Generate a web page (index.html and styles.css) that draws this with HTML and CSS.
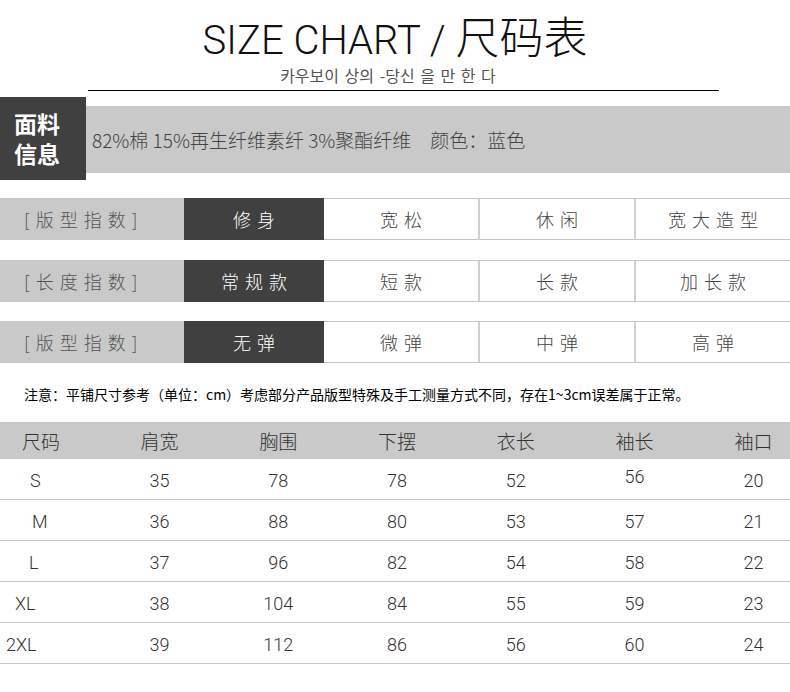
FILE: index.html
```html
<!DOCTYPE html>
<html lang="zh">
<head>
<meta charset="utf-8">
<title>SIZE CHART / 尺码表</title>
<link rel="stylesheet" href="styles.css">
</head>
<body>
<div class="page">
  <header class="head">
    <h1 class="title">SIZE CHART / <span class="title-cjk">尺码表</span></h1>
    <p class="subtitle">카우보이 상의 -당신 을 만 한 다</p>
    <div class="rule"></div>
  </header>

  <section class="fabric">
    <div class="fabric-tag"><span class="tag-line">面料</span><span class="tag-line">信息</span></div>
    <div class="fabric-bar">82%棉 15%再生纤维素纤 3%聚酯纤维　颜色：蓝色</div>
  </section>

  <section class="specs">
    <div class="spec-row">
      <div class="spec-label">[版型指数]</div>
      <div class="spec-cell active">修身</div>
      <div class="spec-cell">宽松</div>
      <div class="spec-cell">休闲</div>
      <div class="spec-cell">宽大造型</div>
    </div>
    <div class="spec-row">
      <div class="spec-label">[长度指数]</div>
      <div class="spec-cell active">常规款</div>
      <div class="spec-cell">短款</div>
      <div class="spec-cell">长款</div>
      <div class="spec-cell">加长款</div>
    </div>
    <div class="spec-row">
      <div class="spec-label">[版型指数]</div>
      <div class="spec-cell active">无弹</div>
      <div class="spec-cell">微弹</div>
      <div class="spec-cell">中弹</div>
      <div class="spec-cell">高弹</div>
    </div>
  </section>

  <p class="note">注意：平铺尺寸参考（单位：cm）考虑部分产品版型特殊及手工测量方式不同，存在1~3cm误差属于正常。</p>

  <section class="size-table">
    <div class="t-row t-head">
      <div class="t-first h">尺码</div>
      <div>肩宽</div><div>胸围</div><div>下摆</div><div>衣长</div><div>袖长</div><div>袖口</div>
    </div>
    <div class="t-row">
      <div class="t-first s">S</div>
      <div>35</div><div>78</div><div>78</div><div>52</div><div class="raised">56</div><div>20</div>
    </div>
    <div class="t-row">
      <div class="t-first m">M</div>
      <div>36</div><div>88</div><div>80</div><div>53</div><div>57</div><div>21</div>
    </div>
    <div class="t-row">
      <div class="t-first l">L</div>
      <div>37</div><div>96</div><div>82</div><div>54</div><div>58</div><div>22</div>
    </div>
    <div class="t-row">
      <div class="t-first xl">XL</div>
      <div>38</div><div>104</div><div>84</div><div>55</div><div>59</div><div>23</div>
    </div>
    <div class="t-row">
      <div class="t-first xxl">2XL</div>
      <div>39</div><div>112</div><div>86</div><div>56</div><div>60</div><div>24</div>
    </div>
  </section>
</div>
</body>
</html>
```

FILE: styles.css
```css
* { box-sizing: border-box; }

html, body {
  margin: 0;
  padding: 0;
  background: #fff;
}

body {
  width: 790px;
  height: 692px;
  overflow: hidden;
  font-family: "Noto Sans CJK SC", "Noto Sans", sans-serif;
  color: #333;
}

.page {
  width: 790px;
}

/* Header */
.head {
  padding-top: 12px;
}

.title {
  margin: 0;
  text-align: center;
  font-family: Roboto, "Noto Sans CJK SC", sans-serif;
  font-weight: 300;
  font-size: 40px;
  line-height: 46px;
  color: #111;
}

.title-cjk {
  font-family: "Noto Sans CJK SC", sans-serif;
  font-weight: 300;
  font-size: 44px;
}

.subtitle {
  margin: 2px 0 0;
  padding-right: 14px;
  text-align: center;
  font-family: "Noto Sans CJK KR", sans-serif;
  font-size: 16px;
  line-height: 18px;
  word-spacing: 2px;
  color: #555;
  font-weight: 400;
}

.rule {
  margin: 6px 0 0 88px;
  width: 631px;
  height: 1px;
  background: #000;
}

/* Fabric */
.fabric {
  margin-top: 6px;
  display: flex;
  align-items: center;
}

.fabric-tag {
  width: 86px;
  height: 83px;
  background: #404040;
  color: #fff;
  font-weight: 700;
  font-size: 23px;
  padding: 12px 0 0 14px;
  display: flex;
  flex-direction: column;
  gap: 2px;
}

.tag-line {
  display: block;
  line-height: 28px;
}

.fabric-bar {
  flex: 1;
  height: 67px;
  margin-top: 2px;
  background: #c8c9c8;
  display: flex;
  align-items: center;
  padding-left: 6px;
  font-size: 19px;
  color: #444;
  font-weight: 300;
}

/* Spec rows */
.specs {
  margin-top: 18px;
  display: flex;
  flex-direction: column;
  gap: 19.5px;
}

.spec-row {
  display: grid;
  grid-template-columns: 184px 140px 154px 156px 156px;
  height: 42px;
}

.spec-label {
  background: #c8c9c8;
  display: flex;
  align-items: center;
  padding-left: 24px;
  font-size: 18px;
  letter-spacing: 6px;
  color: #555;
  font-weight: 300;
}

.spec-cell {
  display: flex;
  align-items: center;
  justify-content: center;
  font-size: 18px;
  letter-spacing: 6px;
  padding-left: 6px;
  color: #444;
  font-weight: 300;
  border-top: 1px solid #c6c6c6;
  border-bottom: 1px solid #c6c6c6;
  border-left: 2px solid #cfcfcf;
}

.spec-cell.active {
  background: #404040;
  color: #fff;
  border: none;
}

.spec-cell.active + .spec-cell {
  border-left: none;
}

/* Note */
.note {
  margin: 21px 0 0 24px;
  font-size: 14px;
  line-height: 20px;
  color: #000;
  font-weight: 400;
}

/* Size table */
.size-table {
  margin-top: 18px;
  width: 790px;
  overflow: hidden;
}

.t-row {
  display: grid;
  grid-template-columns: 100px repeat(6, 118.8px);
  height: 41px;
  align-items: center;
  border-bottom: 1px solid #c8c8c8;
  font-family: Roboto, "Noto Sans", sans-serif;
  font-weight: 300;
  font-size: 18px;
  color: #333;
  padding-top: 3px;
  width: 813px;
}

.t-row > div {
  text-align: center;
}

.t-row > .t-first {
  text-align: left;
}

.t-head {
  height: 37px;
  background: #c8c9c8;
  border-bottom: none;
  padding-top: 0;
  font-family: "Noto Sans CJK SC", sans-serif;
  font-size: 19px;
  color: #333;
}

.t-first.h { padding-left: 22px; }
.t-first.s { padding-left: 30px; }
.t-first.m { padding-left: 32px; }
.t-first.l { padding-left: 29px; }
.t-first.xl { padding-left: 15px; }
.t-first.xxl { padding-left: 6px; }

.raised {
  padding-bottom: 8px;
}
```
